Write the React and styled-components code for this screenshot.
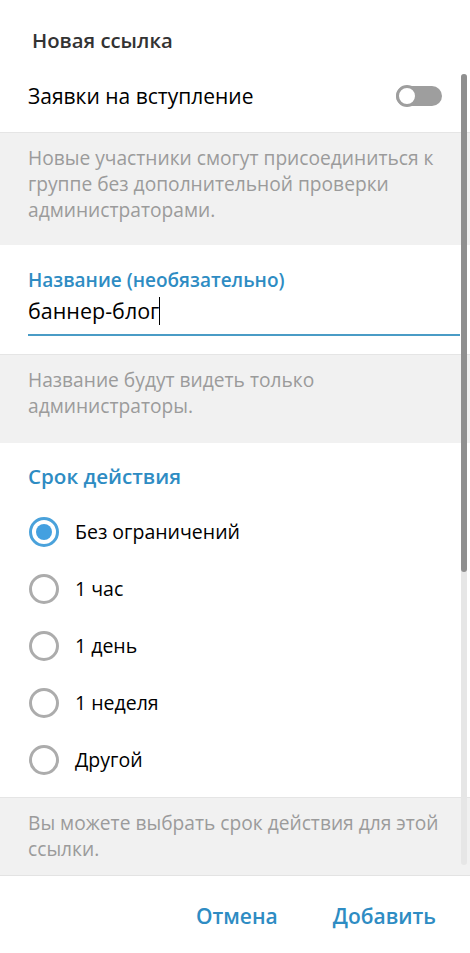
import React from 'react';
import styled, { createGlobalStyle } from 'styled-components';

const Global = createGlobalStyle`
  html, body { margin: 0; padding: 0; background: #fff; }
  body { font-family: "Open Sans", "Noto Sans", sans-serif; }
  #root { width: 470px; height: 953px; }
`;

const Dialog = styled.div`
  width: 470px;
  height: 953px;
  display: flex;
  flex-direction: column;
  background: #fff;
  overflow: hidden;
`;

const Title = styled.h1`
  margin: 0;
  height: 72px;
  box-sizing: border-box;
  padding: 7px 0 0 32px;
  display: flex;
  align-items: center;
  font-size: 20.3px;
  font-weight: 600;
  color: #333;
`;

const Body = styled.div`
  flex: 1;
  position: relative;
  overflow: hidden;
`;

const ToggleRow = styled.div`
  height: 48px;
  margin-bottom: 12px;
  padding: 0 28px;
  display: flex;
  align-items: center;
  justify-content: space-between;
  font-size: 21px;
  color: #000;
`;

const Toggle = styled.span`
  position: relative;
  width: 46px;
  height: 20px;
  border-radius: 10px;
  background: #9e9e9e;
`;

const Knob = styled.span`
  position: absolute;
  left: 0;
  top: -1px;
  width: 22px;
  height: 22px;
  box-sizing: border-box;
  border-radius: 50%;
  border: 3px solid #9e9e9e;
  background: #fff;
`;

const Note = styled.div`
  background: #f1f1f1;
  border-top: 1px solid #e5e5e5;
  padding: ${p => p.$pad};
  font-size: 19.2px;
  line-height: 26px;
  color: #9b9b9b;
`;

const Field = styled.div`
  padding: 22px 10px 18px 28px;
  display: flex;
  flex-direction: column;
  gap: 5px;
`;

const FieldLabel = styled.div`
  font-size: 19px;
  line-height: 26px;
  font-weight: 600;
  color: #2e8cc3;
`;

const Input = styled.div`
  height: 26px;
  font-size: 21.5px;
  line-height: 26px;
  color: #000;
  padding-bottom: 10px;
  border-bottom: 2px solid #4a9cc6;
  display: flex;
  align-items: center;
`;

const Caret = styled.span`
  display: inline-block;
  width: 1px;
  height: 28px;
  background: #000;
`;

const SectionTitle = styled.div`
  padding: 19px 28px 0;
  margin-bottom: 13px;
  font-size: 20.6px;
  line-height: 28px;
  font-weight: 600;
  color: #2e8cc3;
`;

const RadioList = styled.div`
  display: flex;
  flex-direction: column;
  margin-bottom: 9px;
`;

const RadioRow = styled.div`
  height: 57px;
  padding-left: 29px;
  display: flex;
  align-items: center;
  gap: 16px;
  font-size: 19.5px;
  color: #000;
`;

const RadioCircle = styled.span`
  width: 30px;
  height: 30px;
  box-sizing: border-box;
  border-radius: 50%;
  border: 3px solid ${p => (p.$on ? '#4aa2db' : '#acacac')};
  display: flex;
  align-items: center;
  justify-content: center;
  flex-shrink: 0;
`;

const RadioDot = styled.span`
  width: 16px;
  height: 16px;
  border-radius: 50%;
  background: #43a0e0;
`;

const Scrollbar = styled.div`
  position: absolute;
  right: 3px;
  top: 2px;
  bottom: 10px;
  width: 6px;
  border-radius: 3px;
  background: #e6e6e6;
`;

const Thumb = styled.div`
  height: 498px;
  border-radius: 3px;
  background: #8f8f8f;
`;

const Footer = styled.div`
  height: 78px;
  box-sizing: border-box;
  border-top: 1px solid #e3e3e3;
  display: flex;
  align-items: center;
  justify-content: flex-end;
  gap: 55px;
  padding: 2px 34px 0 0;
`;

const Button = styled.span`
  font-size: 21px;
  font-weight: 600;
  color: #2e8cc3;
`;

const options = ['Без ограничений', '1 час', '1 день', '1 неделя', 'Другой'];

export default function App() {
  return (
    <>
      <Global />
      <Dialog>
        <Title>Новая ссылка</Title>
        <Body>
          <ToggleRow>
            <span>Заявки на вступление</span>
            <Toggle>
              <Knob />
            </Toggle>
          </ToggleRow>
          <Note $pad="12px 28px 22px">
            Новые участники смогут присоединиться к группе без дополнительной проверки администраторами.
          </Note>
          <Field>
            <FieldLabel>Название (необязательно)</FieldLabel>
            <Input>
              баннер-блог<Caret />
            </Input>
          </Field>
          <Note $pad="12px 28px 24px">
            Название будут видеть только<br />администраторы.
          </Note>
          <SectionTitle>Срок действия</SectionTitle>
          <RadioList>
            {options.map((o, i) => (
              <RadioRow key={o}>
                <RadioCircle $on={i === 0}>{i === 0 && <RadioDot />}</RadioCircle>
                {o}
              </RadioRow>
            ))}
          </RadioList>
          <Note $pad="12px 28px 13px">
            Вы можете выбрать срок действия для этой ссылки.
          </Note>
          <Scrollbar>
            <Thumb />
          </Scrollbar>
        </Body>
        <Footer>
          <Button>Отмена</Button>
          <Button>Добавить</Button>
        </Footer>
      </Dialog>
    </>
  );
}
